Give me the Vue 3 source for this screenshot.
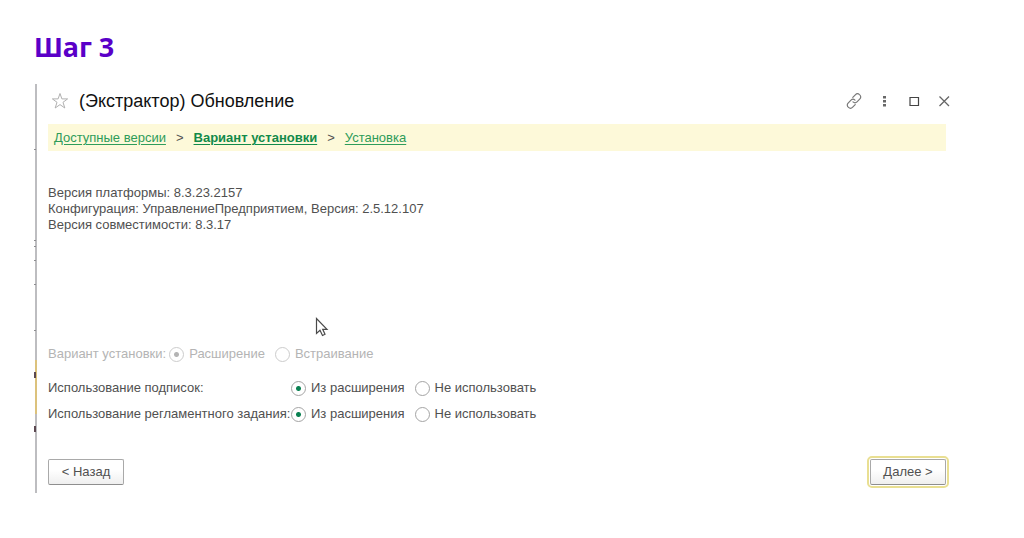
<script setup>
import { reactive } from 'vue'

const info = [
  'Версия платформы: 8.3.23.2157',
  'Конфигурация: УправлениеПредприятием, Версия: 2.5.12.107',
  'Версия совместимости: 8.3.17',
]

const usage = [
  { id: 'subs', label: 'Использование подписок:' },
  { id: 'jobs', label: 'Использование регламентного задания:' },
]
const options = [
  { value: 'ext', label: 'Из расширения' },
  { value: 'none', label: 'Не использовать' },
]
const chosen = reactive({ subs: 'ext', jobs: 'ext' })
</script>

<template>
  <main class="page">
    <h1 class="step">Шаг 3</h1>

    <section class="window">
      <svg class="edge" width="3" height="409" viewBox="0 0 3 409" aria-hidden="true">
        <path d="M2 0V409" stroke="#bdbdc0" stroke-width="2" />
        <path d="M2 276V330" stroke="#dcc27c" stroke-width="2" />
        <path d="M0 65.500H2M0 156.500H2M0 162.500H2M0 176.500H2M0 200.500H2M0 246.500H2" stroke="#8d8d90" />
        <path d="M0 288h2v6H0zM0 342h2v6H0z" fill="#5b4850" />
      </svg>

      <header class="titlebar">
        <button class="icon star" type="button" aria-label="Избранное">
          <svg width="18" height="18" viewBox="0 0 18 18" fill="none" stroke="#b0b0b0">
            <path d="M9 1.500 10.900 6.900H16.600L12 10.300 13.800 16 9 12.600 4.200 16 6 10.300 1.400 6.900H7.100Z" />
          </svg>
        </button>
        <h2 class="title">(Экстрактор) Обновление</h2>
        <div class="tools">
          <button class="icon" type="button" aria-label="Ссылка">
            <svg width="18" height="18" viewBox="0 0 18 18" fill="none" stroke="#777" stroke-width="1.200" stroke-linecap="round">
              <path d="M7.800 5.300 10.300 2.800C11.500 1.600 13.300 1.500 14.500 2.600 16 3.800 16.100 5.700 14.900 6.900L12 9.800C11 10.800 9.200 10.900 8 9.900" />
              <path d="M10.200 12.700 7.700 15.200C6.500 16.400 4.700 16.500 3.500 15.400 2 14.200 1.900 12.300 3.100 11.100L6 8.200C7 7.200 8.800 7.100 10 8.100" />
            </svg>
          </button>
          <button class="icon" type="button" aria-label="Ещё">
            <svg width="18" height="18" viewBox="0 0 18 18" fill="#686868">
              <path d="M8 4h3v2.500H8zM8 8h3v2.500H8zM8 12h3v2.500H8z" />
            </svg>
          </button>
          <button class="icon" type="button" aria-label="Развернуть">
            <svg width="18" height="18" viewBox="0 0 18 18" fill="none" stroke="#444" stroke-width="1.200">
              <path d="M5 5.500H13.500V13.500H5Z" />
            </svg>
          </button>
          <button class="icon" type="button" aria-label="Закрыть">
            <svg width="18" height="18" viewBox="0 0 18 18" fill="none" stroke="#666" stroke-width="1.300">
              <path d="M4.500 4.500 14 14M14 4.500 4.500 14" />
            </svg>
          </button>
        </div>
      </header>

      <nav class="crumbs">
        <a href="#versions">Доступные версии</a>
        <span>&gt;</span>
        <a href="#variant" class="current" aria-current="step">Вариант установки</a>
        <span>&gt;</span>
        <a href="#install">Установка</a>
      </nav>

      <div class="info">
        <p v-for="line in info" :key="line">{{ line }}</p>
      </div>

      <div class="variant" role="radiogroup" aria-labelledby="variant-caption">
        <span id="variant-caption" class="caption">Вариант установки:</span>
        <label class="choice"><input type="radio" name="variant" checked disabled />Расширение</label>
        <label class="choice"><input type="radio" name="variant" disabled />Встраивание</label>
      </div>

      <div class="usage">
        <div v-for="row in usage" :key="row.id" class="row" role="radiogroup" :aria-labelledby="row.id">
          <span :id="row.id" class="name">{{ row.label }}</span>
          <label v-for="o in options" :key="o.value" class="choice">
            <input v-model="chosen[row.id]" type="radio" :name="row.id + '-mode'" :value="o.value" />{{ o.label }}
          </label>
        </div>
      </div>

      <footer class="actions">
        <button class="btn" type="button">&lt; Назад</button>
        <button class="btn primary" type="button">Далее &gt;</button>
      </footer>

      <svg class="pointer" width="14" height="20" viewBox="0 0 14 20" aria-hidden="true">
        <path d="M1.500 1.500V16.500L5 13.300 7.500 18.500 10 17.300 7.700 12.300H12Z" fill="#fff" stroke="#4a4a4a" stroke-width="1.200" />
      </svg>
    </section>
  </main>
</template>

<style>
body {
  margin: 0;
  background: #fff;
}
</style>

<style scoped>
.page {
  padding: 27px 74px 44px 34px;
  font: 13px/16px "Liberation Sans", Arial, sans-serif;
  color: #505050;
}
.step {
  margin: 0 0 17px;
  font: 700 27px/40px "Noto Sans", "Open Sans", sans-serif;
  color: #5a00c8;
}
.window {
  position: relative;
  padding: 0 0 8px 14px;
}
.edge {
  position: absolute;
  left: 0;
  top: 0;
}
.titlebar {
  display: flex;
  align-items: center;
  height: 34px;
  margin-bottom: 6px;
}
.icon {
  display: flex;
  padding: 0;
  border: 0;
  background: none;
}
.star {
  margin: 0 10px 0 3px;
}
.title {
  margin: 0;
  font-size: 18px;
  font-weight: 400;
  line-height: 24px;
  color: #111;
}
.tools {
  display: flex;
  gap: 12px;
  margin: 0 -3px 0 auto;
}
.crumbs {
  display: flex;
  gap: 10px;
  margin-right: 4px;
  padding: 6px 6px 5px;
  background: #fdf9d9;
}
.crumbs a {
  color: #2e9c5a;
  text-underline-offset: 2px;
}
.crumbs .current {
  font-weight: 700;
  color: #128a4a;
}
.info {
  margin-top: 34px;
}
.info p {
  margin: 0;
}
.variant {
  display: flex;
  align-items: center;
  margin-top: 113px;
  color: #b4b4b4;
}
.caption {
  margin-right: 3px;
}
.choice {
  display: flex;
  align-items: center;
  gap: 5px;
  margin-right: 10px;
}
.choice input {
  appearance: none;
  width: 15px;
  height: 15px;
  margin: 0;
  border: 1px solid #a4a4a4;
  border-radius: 50%;
  background: #fff;
}
.choice input:checked {
  background: radial-gradient(circle, #0b8152 2px, #fff 3px);
}
.choice input:disabled {
  border-color: #ccc;
}
.choice input:disabled:checked {
  background: radial-gradient(circle, #b4b4b4 2px, #fff 3px);
}
.usage {
  display: grid;
  grid-template-columns: 243px max-content max-content;
  row-gap: 10px;
  margin-top: 18px;
}
.row {
  display: contents;
}
.name {
  white-space: nowrap;
}
.actions {
  display: flex;
  justify-content: space-between;
  margin: 37px 4px 0 0;
}
.btn {
  width: 76px;
  height: 26px;
  padding: 0;
  border: 1px solid #a9a9a9;
  border-bottom-color: #8e8e8e;
  border-radius: 2px;
  background: linear-gradient(#fff 40%, #efefef);
  font: inherit;
  color: #505050;
}
.primary {
  outline: 2px solid #e9df92;
  outline-offset: 1px;
}
.pointer {
  position: absolute;
  left: 281px;
  top: 233px;
}
</style>
